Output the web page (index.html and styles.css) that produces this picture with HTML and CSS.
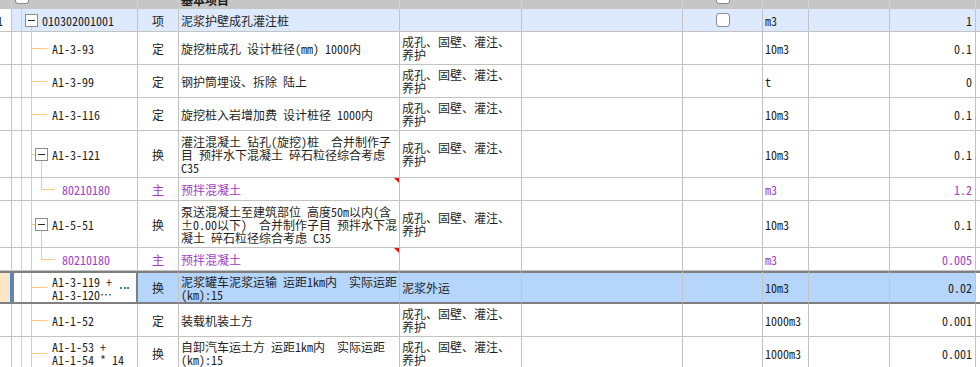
FILE: index.html
```html
<!DOCTYPE html>
<html lang="zh">
<head>
<meta charset="utf-8">
<title>清单</title>
<link rel="stylesheet" href="styles.css">
</head>
<body>
<div class="viewport">
  <div class="grid">
    <div class="row head">
      <div class="c c0"></div>
      <div class="c c1 hchk"><span class="chk"></span></div>
      <div class="c c2"></div>
      <div class="c c3 htxt">基本项目</div>
      <div class="c c4"></div>
      <div class="c c5"></div>
      <div class="c c6"><span class="chk"></span></div>
      <div class="c c7"></div>
      <div class="c c8"></div>
      <div class="c c9"></div>
      <div class="c c10"></div>
    </div>

    <div class="row h23 parent">
      <div class="c c0 idx">1</div>
      <div class="c c1 t-root"><span class="exp"></span>010302001001</div>
      <div class="c c2">项</div>
      <div class="c c3">泥浆护壁成孔灌注桩</div>
      <div class="c c4"></div>
      <div class="c c5"></div>
      <div class="c c6"><span class="chk"></span></div>
      <div class="c c7">m3</div>
      <div class="c c8"></div>
      <div class="c c9">1</div>
      <div class="c c10"></div>
    </div>

    <div class="row">
      <div class="c c0"></div>
      <div class="c c1 t-leaf">A1-3-93</div>
      <div class="c c2">定</div>
      <div class="c c3">旋挖桩成孔 设计桩径(mm) 1000内</div>
      <div class="c c4">成孔、固壁、灌注、<br>养护</div>
      <div class="c c5"></div>
      <div class="c c6"></div>
      <div class="c c7">10m3</div>
      <div class="c c8"></div>
      <div class="c c9">0.1</div>
      <div class="c c10"></div>
    </div>

    <div class="row">
      <div class="c c0"></div>
      <div class="c c1 t-leaf">A1-3-99</div>
      <div class="c c2">定</div>
      <div class="c c3">钢护筒埋设、拆除 陆上</div>
      <div class="c c4">成孔、固壁、灌注、<br>养护</div>
      <div class="c c5"></div>
      <div class="c c6"></div>
      <div class="c c7">t</div>
      <div class="c c8"></div>
      <div class="c c9">0</div>
      <div class="c c10"></div>
    </div>

    <div class="row">
      <div class="c c0"></div>
      <div class="c c1 t-leaf">A1-3-116</div>
      <div class="c c2">定</div>
      <div class="c c3">旋挖桩入岩增加费 设计桩径 1000内</div>
      <div class="c c4">成孔、固壁、灌注、<br>养护</div>
      <div class="c c5"></div>
      <div class="c c6"></div>
      <div class="c c7">10m3</div>
      <div class="c c8"></div>
      <div class="c c9">0.1</div>
      <div class="c c10"></div>
    </div>

    <div class="row h47">
      <div class="c c0"></div>
      <div class="c c1 t-exp"><span class="exp"></span>A1-3-121</div>
      <div class="c c2">换</div>
      <div class="c c3">灌注混凝土 钻孔(旋挖)桩&nbsp; 合并制作子<br>目 预拌水下混凝土 碎石粒径综合考虑<br>C35</div>
      <div class="c c4">成孔、固壁、灌注、<br>养护</div>
      <div class="c c5"></div>
      <div class="c c6"></div>
      <div class="c c7">10m3</div>
      <div class="c c8"></div>
      <div class="c c9">0.1</div>
      <div class="c c10"></div>
    </div>

    <div class="row h23 pur">
      <div class="c c0"></div>
      <div class="c c1 t-sub">80210180</div>
      <div class="c c2">主</div>
      <div class="c c3 flag">预拌混凝土</div>
      <div class="c c4"></div>
      <div class="c c5"></div>
      <div class="c c6"></div>
      <div class="c c7">m3</div>
      <div class="c c8"></div>
      <div class="c c9">1.2</div>
      <div class="c c10"></div>
    </div>

    <div class="row h47">
      <div class="c c0"></div>
      <div class="c c1 t-exp"><span class="exp"></span>A1-5-51</div>
      <div class="c c2">换</div>
      <div class="c c3">泵送混凝土至建筑部位 高度50m以内(含<br>±0.00以下)&nbsp; 合并制作子目 预拌水下混<br>凝土 碎石粒径综合考虑 C35</div>
      <div class="c c4">成孔、固壁、灌注、<br>养护</div>
      <div class="c c5"></div>
      <div class="c c6"></div>
      <div class="c c7">10m3</div>
      <div class="c c8"></div>
      <div class="c c9">0.1</div>
      <div class="c c10"></div>
    </div>

    <div class="row h23 pur">
      <div class="c c0"></div>
      <div class="c c1 t-sub">80210180</div>
      <div class="c c2">主</div>
      <div class="c c3 flag">预拌混凝土</div>
      <div class="c c4"></div>
      <div class="c c5"></div>
      <div class="c c6"></div>
      <div class="c c7">m3</div>
      <div class="c c8"></div>
      <div class="c c9">0.005</div>
      <div class="c c10"></div>
    </div>

    <div class="row sel">
      <div class="c c0"></div>
      <div class="c c1 t-leaf"><span class="code2">A1-3-119 +<br>A1-3-120…</span><span class="more"></span></div>
      <div class="c c2">换</div>
      <div class="c c3">泥浆罐车泥浆运输 运距1km内&nbsp; 实际运距<br>(km):15</div>
      <div class="c c4">泥浆外运</div>
      <div class="c c5"></div>
      <div class="c c6"></div>
      <div class="c c7">10m3</div>
      <div class="c c8"></div>
      <div class="c c9">0.02</div>
      <div class="c c10"></div>
    </div>

    <div class="row">
      <div class="c c0"></div>
      <div class="c c1 t-leaf">A1-1-52</div>
      <div class="c c2">定</div>
      <div class="c c3">装载机装土方</div>
      <div class="c c4">成孔、固壁、灌注、<br>养护</div>
      <div class="c c5"></div>
      <div class="c c6"></div>
      <div class="c c7">1000m3</div>
      <div class="c c8"></div>
      <div class="c c9">0.001</div>
      <div class="c c10"></div>
    </div>

    <div class="row">
      <div class="c c0"></div>
      <div class="c c1 t-leaf">A1-1-53 +<br>A1-1-54 * 14</div>
      <div class="c c2">换</div>
      <div class="c c3">自卸汽车运土方 运距1km内&nbsp; 实际运距<br>(km):15</div>
      <div class="c c4">成孔、固壁、灌注、<br>养护</div>
      <div class="c c5"></div>
      <div class="c c6"></div>
      <div class="c c7">1000m3</div>
      <div class="c c8"></div>
      <div class="c c9">0.001</div>
      <div class="c c10"></div>
    </div>
  </div>
</div>
</body>
</html>
```

FILE: styles.css
```css
:root {
  --ln: #fdc87a;
  --grid: #c3c3c3;
  --dark: #7f7f7f;
}

html, body {
  margin: 0;
  padding: 0;
  background: #fff;
}

body {
  font-family: "Noto Sans Mono CJK SC", "Noto Sans CJK SC", monospace;
  font-size: 12px;
  line-height: 13px;
  color: #1f1f1f;
}

.viewport {
  width: 980px;
  height: 367px;
  overflow: hidden;
}

.grid {
  margin-top: -15px;
}

.row {
  display: flex;
  height: 33px;
}

.row.h23 { height: 23px; }
.row.h47 { height: 47px; }

.c {
  box-sizing: border-box;
  flex: none;
  display: flex;
  align-items: center;
  padding: 0 2px;
  border-right: 1px solid var(--grid);
  border-bottom: 1px solid var(--grid);
  white-space: nowrap;
  overflow: hidden;
}

.c0 { width: 12px; padding: 0; }
.c1 { width: 126px; }
.c2 { width: 41px; justify-content: center; padding: 0; }
.c3 { width: 221px; position: relative; }
.c4 { width: 122px; }
.c5 { width: 161px; }
.c6 { width: 80px; justify-content: center; padding: 0; }
.c7 { width: 46px; }
.c8 { width: 81px; }
.c9 { width: 86px; justify-content: flex-end; padding-right: 3px; }
.c10 { width: 4px; border-right: none; padding: 0; }

/* header (scrolled partially out of view) */
.head {
  height: 24px;
  background: #c6c6c6;
}
.head .c {
  border-bottom: none;
  border-right-color: #d3d3d3;
}
.head .hchk { padding-left: 3px; }
.head .htxt { font-weight: bold; padding-top: 4px; }

.idx {
  justify-content: flex-end;
  padding-right: 8px;
}

/* first (parent) row */
.parent .c:not(.c0) { background-color: #dde9fc; }

/* checkbox */
.chk {
  display: block;
  width: 12px;
  height: 12px;
  border: 1px solid #8a8a8a;
  border-radius: 3px;
  background: #fff;
}

/* tree expander box */
.exp {
  flex: none;
  width: 11px;
  height: 11px;
  border: 1px solid #8c8c8c;
  background: linear-gradient(#2a2a2a, #2a2a2a) center / 7px 1px no-repeat, #fff;
}

/* tree guide lines */
.t-root, .t-leaf, .t-exp, .t-sub {
  background-repeat: no-repeat;
  background-origin: border-box;
}

.t-root {
  padding-left: 13px;
  gap: 4px;
  background-image: linear-gradient(var(--ln), var(--ln)), linear-gradient(var(--ln), var(--ln));
  background-position: 9px 0, 19px 100%;
  background-size: 1px 100%, 1px calc(50% - 6px);
}

.t-leaf {
  padding-left: 40px;
  background-image: linear-gradient(var(--ln), var(--ln)), linear-gradient(var(--ln), var(--ln)), linear-gradient(var(--ln), var(--ln));
  background-position: 9px 0, 19px 0, 19px 50%;
  background-size: 1px 100%, 1px 100%, 16px 1px;
}

.t-exp {
  padding-left: 23px;
  gap: 4px;
  background-image: linear-gradient(var(--ln), var(--ln)), linear-gradient(var(--ln), var(--ln)), linear-gradient(var(--ln), var(--ln)), linear-gradient(var(--ln), var(--ln));
  background-position: 9px 0, 19px 0, 19px 50%, 29px 100%;
  background-size: 1px 100%, 1px 100%, 4px 1px, 1px calc(50% - 6px);
}

.t-sub {
  padding-left: 50px;
  background-image: linear-gradient(var(--ln), var(--ln)), linear-gradient(var(--ln), var(--ln)), linear-gradient(var(--ln), var(--ln)), linear-gradient(var(--ln), var(--ln));
  background-position: 9px 0, 19px 0, 29px 0, 29px 50%;
  background-size: 1px 100%, 1px 100%, 1px 50%, 14px 1px;
}

/* purple (main material) rows */
.pur .c { color: #a23cc6; }

/* red comment marker */
.flag::after {
  content: "";
  position: absolute;
  top: 0;
  right: 0;
  border-style: solid;
  border-width: 0 5px 5px 0;
  border-color: transparent #f01010 transparent transparent;
}

/* selected row */
.sel .c {
  border-top: 2px solid var(--dark);
  border-bottom: 2px solid var(--dark);
  background-color: #b5d5fb;
}
.sel .c0 {
  background-color: #fde6c6;
  border-right: 2px solid #3d8ee6;
}
.sel .c1 {
  background-color: #fff;
  border-left: 2px solid var(--dark);
  border-right: 2px solid var(--dark);
  padding-left: 38px;
  padding-right: 0;
}
.sel .c10 { background-color: #fff; }

.code2 { display: block; }

.more {
  margin-left: auto;
  margin-right: 7px;
  width: 9px;
  height: 2px;
  background: repeating-linear-gradient(90deg, #3a80d2 0 2px, transparent 2px 3.5px);
}
```
